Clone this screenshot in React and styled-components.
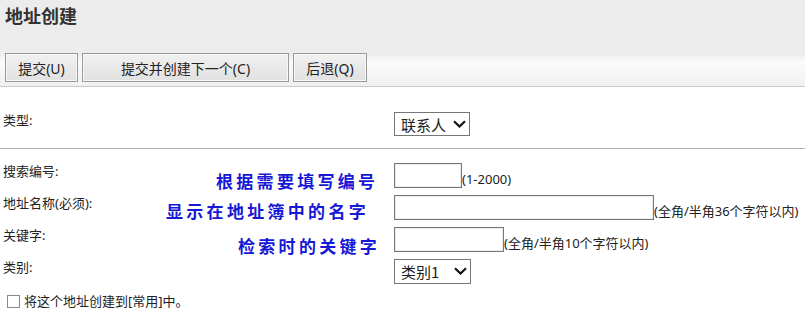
import React from "react";
import styled, { createGlobalStyle } from "styled-components";

const GlobalStyle = createGlobalStyle`
  body {
    margin: 0;
    background: #fff;
    font-family: "Noto Sans", "Noto Sans CJK SC", sans-serif;
    font-size: 13px;
    color: #222;
  }
  * { box-sizing: border-box; }
`;

const buttons = [
  { label: "提交(U)", width: 73 },
  { label: "提交并创建下一个(C)", width: 207 },
  { label: "后退(Q)", width: 74 },
];

const fields = [
  { label: "搜索编号:", width: 68, hint: "(1-2000)" },
  { label: "地址名称(必须):", width: 260, hint: "(全角/半角36个字符以内)" },
  { label: "关键字:", width: 110, hint: "(全角/半角10个字符以内)" },
];

const notes = [
  { text: "根据需要填写编号", left: 216, top: 21 },
  { text: "显示在地址簿中的名字", left: 166, top: 51 },
  { text: "检索时的关键字", left: 238, top: 86 },
];

const Header = styled.div`
  height: 87px;
  padding: 4px 0 0 5px;
  border-bottom: 1px solid #c9c9c9;
  background: linear-gradient(
    to bottom,
    #ececec 0,
    #ececec 54px,
    #fbfbfb 62px,
    #f0f0f0 86px
  );
`;

const Title = styled.h1`
  margin: 0;
  font-family: "Noto Sans CJK SC", sans-serif;
  font-size: 18px;
  line-height: 22px;
  font-weight: bold;
  color: #333;
`;

const Toolbar = styled.div`
  display: flex;
  gap: 4px;
  margin-top: 27px;
`;

const Button = styled.button`
  width: ${({ $w }) => $w}px;
  height: 29px;
  padding: 0;
  border: 1px solid #999;
  box-shadow: inset 0 0 0 1px #f7f7f7;
  background: linear-gradient(to bottom, #f1f1f1, #e1e1e1);
  font-family: "Noto Sans", "Noto Sans CJK SC", sans-serif;
  font-size: 14px;
  color: #222;
`;

const Row = styled.div`
  display: grid;
  grid-template-columns: 394px auto;
  align-items: start;
`;

const TypeSection = styled(Row)`
  padding: 25px 0 12px;
  border-bottom: 1px solid #b4b4b4;
`;

const Label = styled.div`
  padding-left: 3px;
  line-height: 16px;
`;

const Fields = styled.div`
  position: relative;
  display: flex;
  flex-direction: column;
  gap: 7px;
  padding-top: 14px;
`;

const FieldCell = styled.div`
  display: flex;
  align-items: flex-end;
`;

const Input = styled.input`
  width: ${({ $w }) => $w}px;
  height: 25px;
  margin: 0;
  border: 1px solid #767676;
  box-shadow: inset 0 0 0 1px #ececec;
  background: #fff;
`;

const Hint = styled.span`
  line-height: 16px;
  padding-bottom: 1px;
`;

const SelectWrap = styled.div`
  position: relative;
  width: ${({ $w }) => $w}px;
  height: ${({ $h }) => $h}px;
`;

const Select = styled.select`
  appearance: none;
  width: 100%;
  height: 100%;
  margin: 0;
  padding: 0 0 0 6px;
  border: 1px solid #767676;
  border-radius: 0;
  background: #fff;
  font-family: "Noto Sans CJK SC", sans-serif;
  font-size: 15px;
  color: #222;
`;

const Chevron = styled.svg`
  position: absolute;
  right: 4px;
  top: 8px;
  pointer-events: none;
`;

const Note = styled.div`
  position: absolute;
  font-family: "Noto Sans CJK SC", sans-serif;
  font-size: 17px;
  line-height: 21px;
  font-weight: bold;
  letter-spacing: 3.3px;
  color: #1717d6;
  white-space: nowrap;
`;

const CheckRow = styled.label`
  display: flex;
  align-items: center;
  gap: 4px;
  margin-top: 9px;
  padding-left: 7px;
  line-height: 16px;
`;

const Box = styled.span`
  width: 13px;
  height: 13px;
  border: 1px solid #8a8a8a;
  background: #fff;
`;

const DropDown = ({ value, w, h }) => (
  <SelectWrap $w={w} $h={h}>
    <Select defaultValue={value}>
      <option>{value}</option>
    </Select>
    <Chevron width="13" height="8" viewBox="0 0 13 8">
      <path d="M1 1.2 L6.5 6.5 L12 1.2" fill="none" stroke="#111" strokeWidth="2.2" />
    </Chevron>
  </SelectWrap>
);

const App = () => (
  <>
    <GlobalStyle />
    <Header>
      <Title>地址创建</Title>
      <Toolbar>
        {buttons.map((b) => (
          <Button key={b.label} $w={b.width}>
            {b.label}
          </Button>
        ))}
      </Toolbar>
    </Header>

    <TypeSection>
      <Label>类型:</Label>
      <DropDown value="联系人" w={76} h={24} />
    </TypeSection>

    <Fields>
      {fields.map((f) => (
        <Row key={f.label}>
          <Label>{f.label}</Label>
          <FieldCell>
            <Input $w={f.width} />
            <Hint>{f.hint}</Hint>
          </FieldCell>
        </Row>
      ))}
      <Row>
        <Label>类别:</Label>
        <DropDown value="类别1" w={77} h={25} />
      </Row>
      {notes.map((n) => (
        <Note key={n.text} style={{ left: n.left, top: n.top }}>
          {n.text}
        </Note>
      ))}
    </Fields>

    <CheckRow>
      <Box />
      将这个地址创建到[常用]中。
    </CheckRow>
  </>
);

export default App;
